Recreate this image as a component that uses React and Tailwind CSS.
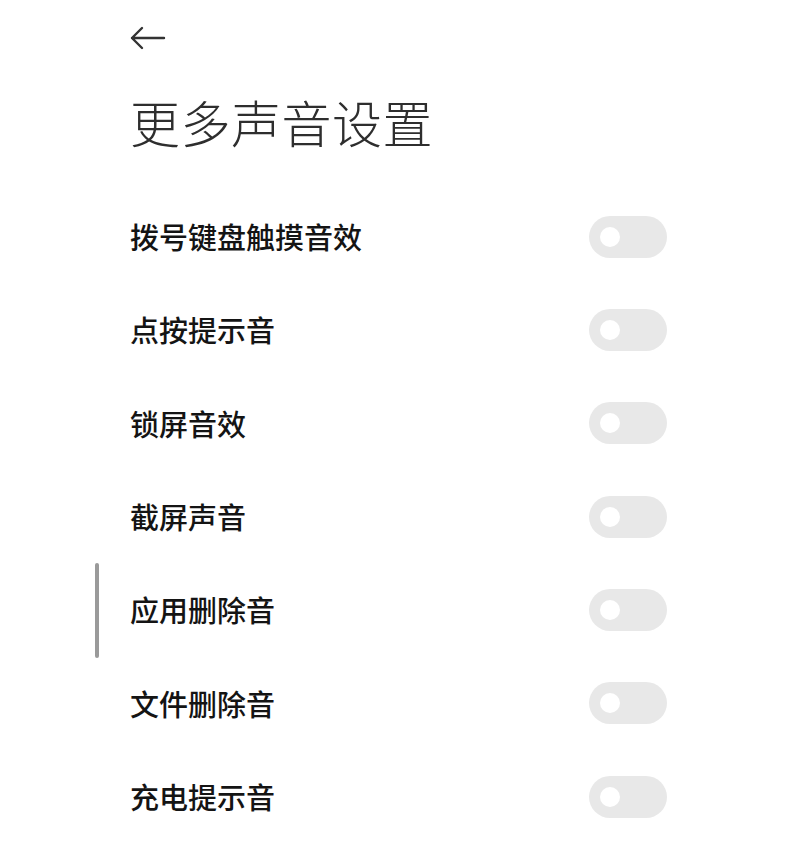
import React from "react";

const items = [
  "拨号键盘触摸音效",
  "点按提示音",
  "锁屏音效",
  "截屏声音",
  "应用删除音",
  "文件删除音",
  "充电提示音",
];

function Toggle() {
  return (
    <div className="w-[78px] h-[42px] rounded-full bg-[#e8e8e8] flex items-center pl-[11px]">
      <div className="w-[20px] h-[20px] rounded-full bg-white" />
    </div>
  );
}

export default function App() {
  return (
    <div
      className="relative w-full h-[853px] bg-white overflow-hidden pl-[130px] pr-[133px]"
      style={{ fontFamily: '"Noto Sans CJK SC", "Noto Sans", sans-serif' }}
    >
      <div className="h-[60px] pt-[26px]">
        <svg width="36" height="24" viewBox="0 0 36 24" fill="none">
          <path
            d="M34 12H2M12 2L2 12L12 22"
            stroke="#333"
            strokeWidth="2.4"
            strokeLinecap="round"
            strokeLinejoin="round"
          />
        </svg>
      </div>
      <div className="h-[130px] flex items-center pb-[8px]">
        <h1 className="text-[50px] leading-none font-light text-[#2e2e2e] tracking-[0.5px]">
          更多声音设置
        </h1>
      </div>
      <div className="flex flex-col">
        {items.map((t) => (
          <div key={t} className="h-[93.33px] flex items-center justify-between">
            <span className="text-[29px] leading-none font-medium text-[#141414]">{t}</span>
            <Toggle />
          </div>
        ))}
      </div>
      <div className="absolute left-[95px] top-[563px] w-[4px] h-[95px] rounded-full bg-[#9a9a9a]" />
    </div>
  );
}
